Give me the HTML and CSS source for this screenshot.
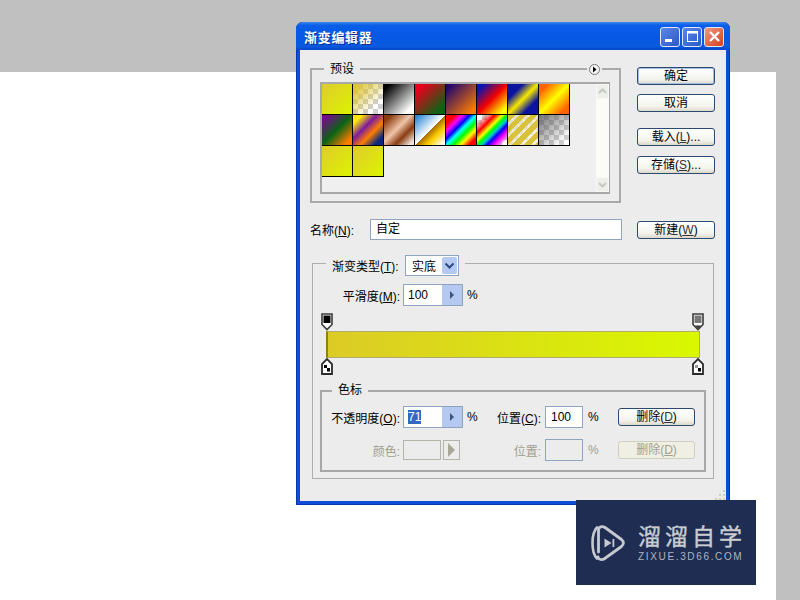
FILE: index.html
```html
<!DOCTYPE html>
<html lang="zh-CN">
<head>
  <meta charset="UTF-8">
  <title>渐变编辑器</title>
  <link rel="stylesheet" href="styles.css">
</head>
<body>

  <div class="canvas"></div>

  <div class="dialog">
    <div class="titlebar">
      <span class="title">渐变编辑器</span>
      <span class="winbtn">
        <svg width="17" height="17" viewBox="0 0 17 17"><rect x="3" y="11" width="7" height="3" fill="#fff"/></svg>
      </span>
      <span class="winbtn">
        <svg width="17" height="17" viewBox="0 0 17 17"><rect x="3.500" y="3.500" width="10" height="10" fill="none" stroke="#fff"/><rect x="3" y="3" width="11" height="2.500" fill="#fff"/></svg>
      </span>
      <span class="winbtn close">
        <svg width="17" height="17" viewBox="0 0 17 17"><path d="M4 4l9 9M13 4l-9 9" stroke="#fff" stroke-width="2.400"/></svg>
      </span>
    </div>

    <div class="client">
      <div class="top">
        <div class="presets">
          <span class="legend">预设</span>
          <span class="menu-dot">
            <svg width="11" height="11" viewBox="0 0 11 11"><circle cx="5.500" cy="5.500" r="5" fill="#f4f4f4" stroke="#777"/><path d="M4 2.500l3.500 3-3.500 3z" fill="#000"/></svg>
          </span>
          <div class="swatch-list">
            <div class="swatches">
              <i class="sw s1"></i><i class="sw s2"></i><i class="sw s3"></i><i class="sw s4"></i>
              <i class="sw s5"></i><i class="sw s6"></i><i class="sw s7"></i><i class="sw s8"></i>
              <i class="sw s9"></i><i class="sw s10"></i><i class="sw s11"></i><i class="sw s12"></i>
              <i class="sw s13"></i><i class="sw s14"></i><i class="sw s15"></i><i class="sw s16"></i>
              <i class="sw s1"></i><i class="sw s1"></i>
            </div>
            <div class="scrollbar">
              <span class="sb-arrow">
                <svg width="13" height="15" viewBox="0 0 13 15"><path d="M3 9l3.500-3.500L10 9" fill="none" stroke="#c4c8c4" stroke-width="2"/></svg>
              </span>
              <span class="sb-arrow">
                <svg width="13" height="15" viewBox="0 0 13 15"><path d="M3 6l3.500 3.500L10 6" fill="none" stroke="#c4c8c4" stroke-width="2"/></svg>
              </span>
            </div>
          </div>
        </div>
        <div class="side-buttons">
          <button class="btn default">确定</button>
          <button class="btn cancel">取消</button>
          <button class="btn load">载入(<u>L</u>)...</button>
          <button class="btn save">存储(<u>S</u>)...</button>
        </div>
      </div>

      <div class="name-row">
        <label class="name-label">名称(<u>N</u>):</label>
        <div class="field name-field">自定</div>
        <button class="btn new">新建(<u>W</u>)</button>
      </div>

      <div class="gradient-group">
        <div class="type-legend">
          <label>渐变类型(<u>T</u>):</label>
          <div class="select">
            <span>实底</span>
            <span class="select-arrow">
              <svg width="15" height="17" viewBox="0 0 15 17"><path d="M3.500 6.500l4 4 4-4" fill="none" stroke="#2d4a86" stroke-width="2"/></svg>
            </span>
          </div>
        </div>

        <div class="smooth-row">
          <label class="smooth-label">平滑度(<u>M</u>):</label>
          <div class="spin">
            <span class="spin-value">100</span>
            <span class="spin-arrow"><svg width="6" height="8" viewBox="0 0 6 8"><path d="M1 0l4 4-4 4z" fill="#3c5680"/></svg></span>
          </div>
          <span class="pct">%</span>
        </div>

        <div class="ramp">
          <svg class="stop top-left" width="12" height="18" viewBox="0 0 12 18"><path d="M1 1h10v10.500l-5 5-5-5z" fill="#fff" stroke="#3a3a3a" stroke-width="1.600"/><rect x="2.500" y="2.500" width="7" height="7.500" fill="#000"/></svg>
          <svg class="stop top-right" width="12" height="18" viewBox="0 0 12 18"><path d="M1 1h10v10.500l-5 5-5-5z" fill="#fff" stroke="#3a3a3a" stroke-width="1.600"/><rect x="2.500" y="2.500" width="7" height="7.500" fill="#777"/><path d="M3 12.500l3 3 3-3z" fill="#333"/></svg>
          <div class="ramp-bar"></div>
          <svg class="stop bottom-left" width="12" height="17" viewBox="0 0 12 17"><path d="M1 16v-10l5-5 5 5v10z" fill="#fff" stroke="#2a2a2a" stroke-width="1.800"/><rect x="3" y="7" width="3" height="3" fill="#000"/><rect x="6" y="10" width="3" height="3.500" fill="#000"/></svg>
          <svg class="stop bottom-right" width="12" height="17" viewBox="0 0 12 17"><path d="M1 16v-10l5-5 5 5v10z" fill="#fff" stroke="#2a2a2a" stroke-width="1.800"/><rect x="3" y="7" width="3" height="3" fill="#999"/><rect x="6" y="10" width="3" height="3.500" fill="#000"/></svg>
        </div>

        <div class="stops-group">
          <span class="legend stops-legend">色标</span>
          <div class="stop-row first">
            <label class="col-a">不透明度(<u>O</u>):</label>
            <div class="spin">
              <span class="spin-value"><mark class="selected">71</mark></span>
              <span class="spin-arrow"><svg width="6" height="8" viewBox="0 0 6 8"><path d="M1 0l4 4-4 4z" fill="#3c5680"/></svg></span>
            </div>
            <span class="pct col-pct">%</span>
            <label class="col-b">位置(<u>C</u>):</label>
            <div class="field pos-field">100</div>
            <span class="pct col-pct2">%</span>
            <button class="btn del">删除(<u>D</u>)</button>
          </div>
          <div class="stop-row second off">
            <label class="col-a">颜色:</label>
            <div class="color-pick">
              <span class="color-box"></span>
              <span class="color-arrow"><svg width="9" height="14" viewBox="0 0 9 14"><path d="M1 0l7 7-7 7z" fill="#a8a898"/></svg></span>
            </div>
            <span class="pct col-pct"></span>
            <label class="col-b">位置:</label>
            <div class="field pos-field off-field"></div>
            <span class="pct col-pct2">%</span>
            <button class="btn del off-btn">删除(<u>D</u>)</button>
          </div>
        </div>
      </div>

      <svg class="grip" width="13" height="12" viewBox="0 0 13 12">
        <path d="M10 1h2v2h-2zM6 5h2v2H6zM10 5h2v2h-2zM2 9h2v2H2zM6 9h2v2H6zM10 9h2v2h-2z" fill="#cfcdbb"/>
      </svg>
    </div>
  </div>

  <div class="watermark">
    <svg class="wm-logo" width="36" height="38" viewBox="0 0 36 38">
      <path d="M7 3.500C3.500 7 2.500 12 2.500 19S3.500 31 7 34.500" fill="none" stroke="#c6c9cf" stroke-width="2.600" stroke-linecap="round"/>
      <path d="M8 33c0 2 3 3.500 6 2L31.500 22.500c2.500-2 2.500-5 0-7L15 3.500C12 1.500 8.500 3 8.500 6V28" fill="none" stroke="#c6c9cf" stroke-width="2.800" stroke-linecap="round" stroke-linejoin="round"/>
      <path d="M14.500 14.500l7 4.500-7 4.500z" fill="#c6c9cf"/>
      <rect x="22.500" y="15" width="1.800" height="8" fill="#c6c9cf"/>
    </svg>
    <div class="wm-text">
      <div class="wm-name">溜溜自学</div>
      <div class="wm-url">ZIXUE.3D66.COM</div>
    </div>
  </div>

</body>
</html>
```

FILE: styles.css
```css
html, body {
  margin: 0;
  height: 100%;
}

body {
  position: relative;
  width: 800px;
  height: 600px;
  overflow: hidden;
  background-color: #c0c0c0;
  font-family: "Liberation Sans", "Noto Sans CJK SC", sans-serif;
  font-size: 12px;
  color: #000;
}

.canvas {
  width: 776px;
  height: 528px;
  margin-top: 72px;
  float: left;
  background-color: #fff;
}

/* window */
.dialog {
  position: absolute;
  left: 296px;
  top: 22px;
  width: 434px;
  height: 483px;
  box-sizing: border-box;
  border-radius: 7px 7px 0 0;
  background-color: #0a4fd6;
  padding: 0 4px 4px;
  box-shadow: inset 1px 0 #0838b0, inset -1px 0 #0838b0, inset 0 -1px #0838b0;
}

.titlebar {
  display: flex;
  align-items: center;
  height: 28px;
  margin: 0 -4px;
  padding: 0 6px 0 8px;
  border-radius: 7px 7px 0 0;
  background: linear-gradient(#3c86ee 0, #0a5ee8 12%, #0658e4 60%, #0a5ae0 85%, #0548c8 100%);
}

.title {
  flex: 1;
  color: #fff;
  font-size: 13px;
  font-weight: bold;
  letter-spacing: 0.7px;
  text-shadow: 1px 1px #0a2f90;
}

.winbtn {
  box-sizing: border-box;
  width: 20px;
  height: 20px;
  margin: 1px 0 0 3px;
  border: 1px solid #dfe8fb;
  border-radius: 3px;
  background: linear-gradient(135deg, #5b86e8, #2c58c8);
  overflow: hidden;
}

.winbtn + .winbtn {
  margin-left: 2px;
}

.winbtn svg {
  display: block;
  margin: 0.5px;
}

.winbtn.close {
  background: linear-gradient(135deg, #ec9a80, #d8401c);
}

.client {
  position: relative;
  height: 451px;
  overflow: hidden;
  background-color: #ececec;
}

.grip {
  position: absolute;
  right: 0;
  bottom: 0;
}

/* upper part */
.top {
  display: flex;
  padding-top: 17px;
}

.presets {
  position: relative;
  box-sizing: border-box;
  width: 311px;
  height: 135px;
  margin: 1px 0 0 10px;
  border: 2px solid #aaa;
}

.legend {
  position: absolute;
  left: 12px;
  top: -9px;
  padding: 0 6px;
  line-height: 16px;
  background-color: #ececec;
}

.menu-dot {
  position: absolute;
  right: 17px;
  top: -6px;
  display: flex;
  background-color: #ececec;
  padding: 0 2px;
}

.swatch-list {
  display: flex;
  justify-content: space-between;
  box-sizing: border-box;
  width: 290px;
  height: 112px;
  margin: 12px 0 0 8px;
  border: 2px solid #a8a8a8;
  border-right-width: 1px;
  background-color: #efefef;
}

.swatches {
  display: grid;
  grid-template-columns: repeat(8, 31px);
  grid-auto-rows: 31px;
}

.sw {
  display: block;
  box-sizing: border-box;
  border-right: 1px solid #000;
  border-bottom: 1px solid #000;
  background-color: #fff;
}

/* preset gradients */
.s1 { background-image: linear-gradient(135deg, #dfcb2c, #dcf400); }
.s2 {
  background-image: linear-gradient(135deg, #dcc22e 5%, rgba(220, 200, 60, 0) 75%),
    repeating-conic-gradient(#cfcfcf 0 25%, #fff 0 50%);
  background-size: auto, 10px 10px;
}
.s3 { background-image: linear-gradient(135deg, #000 10%, #fff 85%); }
.s4 { background-image: linear-gradient(135deg, #e8001c 15%, #0a6414 85%); }
.s5 { background-image: linear-gradient(135deg, #26086c 10%, #ff7c00 90%); }
.s6 { background-image: linear-gradient(135deg, #0a14b0 12%, #f00000 50%, #ffff00 88%); }
.s7 { background-image: linear-gradient(135deg, #0a14a0 25%, #f8e800 50%, #0a14a0 75%); }
.s8 { background-image: linear-gradient(135deg, #ff6400 15%, #ffff00 50%, #ff6400 85%); }
.s9 { background-image: linear-gradient(135deg, #7a0a8c 10%, #0a6414 50%, #ff7c00 88%); }
.s10 { background-image: linear-gradient(135deg, #ffe800 15%, #7c1c9c 40%, #ff7c00 62%, #0a2a80 85%); }
.s11 { background-image: linear-gradient(135deg, #8a3c10 12%, #f0c4a8 45%, #8a3c10 68%, #f0e4dc 92%); }
.s12 { background-image: linear-gradient(135deg, #2c88d4 5%, #fff 50%, #a86c00 51%, #ffd000 70%, #fff 95%); }
.s13 { background-image: linear-gradient(135deg, #f00 15%, #f0f 28%, #00f 40%, #0ff 50%, #0f0 62%, #ff0 74%, #f00 88%); }
.s14 {
  background-image: linear-gradient(135deg, rgba(255, 0, 0, 0) 12%, #f00 30%, #ff0 42%, #0f0 50%, #0cc 58%, #00f 66%, #f0f 78%, rgba(255, 0, 255, 0) 92%),
    repeating-conic-gradient(#cfcfcf 0 25%, #fff 0 50%);
  background-size: auto, 10px 10px;
}
.s15 {
  background-image: repeating-linear-gradient(135deg, #d8c23c 0 5px, rgba(216, 194, 60, 0.2) 5px 8px),
    repeating-conic-gradient(#e8e8e8 0 25%, #fff 0 50%);
  background-size: auto, 10px 10px;
}
.s16 {
  background-image: linear-gradient(135deg, rgba(90, 90, 90, 0.85), rgba(90, 90, 90, 0) 85%),
    repeating-conic-gradient(#cfcfcf 0 25%, #fff 0 50%);
  background-size: auto, 10px 10px;
}

.scrollbar {
  display: flex;
  flex-direction: column;
  justify-content: space-between;
  width: 13px;
  background-color: #fbfbf8;
}

.sb-arrow {
  display: block;
  height: 15px;
  background-color: #efefe9;
  border: 1px solid #f8f8f8;
  box-sizing: border-box;
}

.sb-arrow svg {
  display: block;
  margin: -1px;
}

/* buttons */
.side-buttons {
  display: flex;
  flex-direction: column;
  margin-left: 16px;
}

.btn {
  box-sizing: border-box;
  width: 78px;
  height: 18px;
  padding: 0;
  border: 1px solid #2b4a6e;
  border-radius: 3px;
  background: linear-gradient(#fff, #f4f4ee 70%, #dcd8cc);
  font: inherit;
  line-height: 14px;
  color: #000;
}

.btn u {
  color: #333;
}

.btn.default {
  box-shadow: inset 0 0 0 1px #a4bde4;
}

.btn.cancel {
  margin-top: 9px;
}

.btn.load {
  margin-top: 16px;
}

.btn.save {
  margin-top: 10px;
}

/* name row */
.name-row {
  display: flex;
  align-items: center;
  height: 21px;
  margin-top: 16px;
  padding-left: 10px;
}

.name-label {
  width: 60px;
}

.field {
  box-sizing: border-box;
  border: 1px solid #8ea4bf;
  background-color: #fff;
  padding-left: 5px;
  line-height: 19px;
}

.name-field {
  width: 252px;
  height: 21px;
}

.btn.new {
  margin: 0 0 0 15px;
}

/* gradient type box */
.gradient-group {
  box-sizing: border-box;
  width: 402px;
  height: 216px;
  margin: 23px 0 0 12px;
  border: 1px solid #aeaeae;
}

.type-legend {
  display: flex;
  align-items: center;
  width: fit-content;
  height: 21px;
  margin: -9px 0 0 13px;
  padding: 0 6px;
  background-color: #ececec;
}

.type-legend label {
  width: 73px;
}

.select {
  display: flex;
  align-items: center;
  justify-content: space-between;
  box-sizing: border-box;
  width: 54px;
  height: 21px;
  padding: 0 1px 0 6px;
  border: 1px solid #8ea4bf;
  background-color: #fff;
}

.select-arrow {
  display: flex;
  background-color: #b4c8f0;
  border-radius: 2px;
}

.smooth-row {
  display: flex;
  align-items: center;
  height: 22px;
  margin-top: 8px;
}

.smooth-label {
  width: 87px;
  text-align: right;
}

.spin {
  display: flex;
  box-sizing: border-box;
  width: 60px;
  height: 22px;
  margin-left: 3px;
  border: 1px solid #8ea4bf;
  background-color: #fff;
}

.spin-value {
  flex: 1;
  padding-left: 4px;
  line-height: 20px;
}

.spin-arrow {
  display: flex;
  align-items: center;
  justify-content: center;
  width: 20px;
  background-color: #b4c8f0;
}

.pct {
  margin-left: 4px;
}

/* gradient bar and its stops */
.ramp {
  position: relative;
  width: 384px;
  height: 62px;
  margin: 7px 0 0 8px;
}

.ramp-bar {
  position: absolute;
  left: 5px;
  top: 18px;
  box-sizing: border-box;
  width: 374px;
  height: 27px;
  border: 1px solid #b0ac70;
  border-left: 2px solid #8c8214;
  background-image: linear-gradient(90deg, #dccb26, #d9f800);
}

.stop {
  position: absolute;
}

.top-left { left: 0; top: 0; }
.top-right { right: 1px; top: 0; }
.bottom-left { left: 0; bottom: 0; }
.bottom-right { right: 1px; bottom: 0; }

/* color stop box */
.stops-group {
  position: relative;
  box-sizing: border-box;
  width: 386px;
  height: 82px;
  margin: 15px 0 0 7px;
  border: 2px solid #a8a8a8;
}

.stops-legend {
  top: -10px;
  left: 10px;
}

.stop-row {
  display: flex;
  align-items: center;
  height: 22px;
}

.stop-row.first {
  margin-top: 14px;
}

.stop-row.second {
  margin-top: 11px;
}

.col-a {
  width: 78px;
  text-align: right;
}

.stop-row .spin {
  margin-left: 3px;
}

.col-pct {
  width: 20px;
  margin-left: 4px;
}

.col-b {
  width: 54px;
  text-align: right;
}

.pos-field {
  width: 38px;
  height: 22px;
  margin-left: 4px;
  line-height: 20px;
}

.col-pct2 {
  width: 20px;
  margin-left: 5px;
}

.selected {
  background-color: #316ac5;
  color: #fff;
}

.btn.del {
  width: 77px;
  margin-left: 10px;
}

.off {
  color: #a0a090;
}

.color-pick {
  display: flex;
  width: 60px;
  margin-left: 3px;
}

.color-box {
  box-sizing: border-box;
  width: 38px;
  height: 20px;
  border: 1px solid #b4b4aa;
  background-color: #ececec;
}

.color-arrow {
  display: flex;
  align-items: center;
  justify-content: center;
  box-sizing: border-box;
  width: 17px;
  height: 20px;
  margin-left: 2px;
  border: 1px solid #b4b4aa;
}

.off-field {
  background-color: #ececec;
}

.btn.off-btn {
  border-color: #cfcfc0;
  background: #f0efe4;
  color: #a0a090;
}

.btn.off-btn u {
  color: #a0a090;
}

/* brand block, lower right */
.watermark {
  position: absolute;
  left: 576px;
  top: 500px;
  display: flex;
  align-items: flex-start;
  box-sizing: border-box;
  width: 180px;
  height: 85px;
  padding: 24px 0 0 14px;
  background-color: #1f2d52;
  color: #c9ccd2;
}

.wm-logo {
  flex: none;
}

.wm-text {
  margin-left: 12px;
}

.wm-name {
  font-size: 23px;
  line-height: 27px;
  letter-spacing: 4px;
  -webkit-text-stroke: 0.4px #c9ccd2;
}

.wm-url {
  font-size: 10px;
  line-height: 12px;
  letter-spacing: 1.65px;
  opacity: 0.85;
}
```
